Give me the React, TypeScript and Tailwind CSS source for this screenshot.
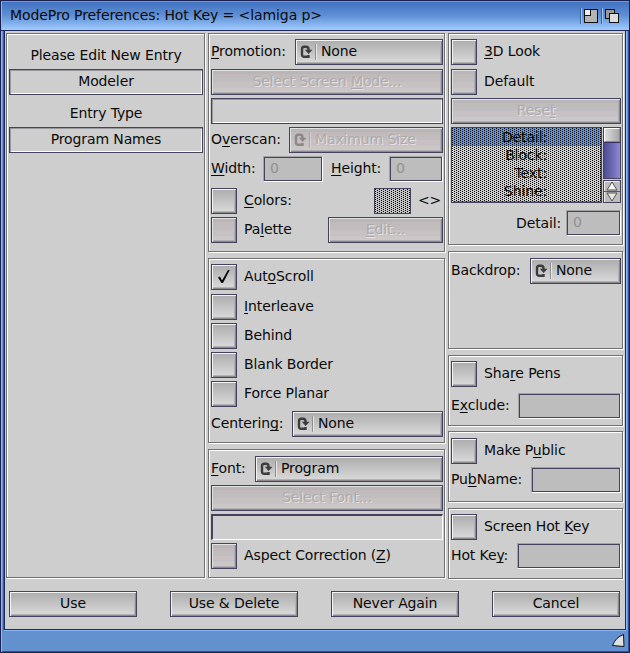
import React from "react";

const FONT = "font-['DejaVu_Sans',sans-serif] tracking-[-0.12px]";

const RAISED =
  "border border-[#44425c] shadow-[inset_1px_1px_0_#f4f4f4,inset_-1px_-1px_0_#8a8a8e,inset_-2px_-2px_0_#b2b2b4] bg-linear-to-b from-[#acacac] to-[#dcdcdc]";
const RAISED_OFF =
  "border border-[#44425c] shadow-[inset_1px_1px_0_#e2e2e2,inset_-1px_-1px_0_#8a8a8e,inset_-2px_-2px_0_#b0aeb0] bg-[linear-gradient(180deg,#b8b6b8_0px,#b8b6b8_4px,#c2b9b9_4px,#c2b9b9_7px,#bfbdbf_7px,#bfbdbf_12px,#c9c1c1_12px,#c9c1c1_15px,#c4c2c4_15px,#c4c2c4_18px,#cdc6c6_18px,#cdc6c6_21px,#cacacc_21px)]";
const EMBOSS = "text-[#aeaaac] [text-shadow:1px_1px_0_#e6e2e4]";

/* Renders a label; the character after "_" is its keyboard shortcut. */
function Txt({ t, className = "" }: { t: string; className?: string }) {
  const i = t.indexOf("_");
  return (
    <span className={`whitespace-pre ${className}`}>
      {i < 0 ? (
        t
      ) : (
        <>
          {t.slice(0, i)}
          <span className="underline decoration-1 underline-offset-2 [text-decoration-skip-ink:none]">{t[i + 1]}</span>
          {t.slice(i + 2)}
        </>
      )}
    </span>
  );
}

/* Label in front of a gadget in a row */
function Label({ t, className = "" }: { t: string; className?: string }) {
  return <Txt t={t} className={`pb-[2px] ${className}`} />;
}

function Group({ className = "", children }: { className?: string; children?: React.ReactNode }) {
  return (
    <div
      className={`flex flex-col border border-[#717174] pr-px pl-[2px] shadow-[inset_1px_1px_0_#fff,1px_1px_0_#fff] ${className}`}
    >
      {children}
    </div>
  );
}

function Row({ className = "", children }: { className?: string; children?: React.ReactNode }) {
  return <div className={`flex h-[26px] shrink-0 items-center justify-between leading-[24px] ${className}`}>{children}</div>;
}

function Button({ t, off, className = "" }: { t: string; off?: boolean; className?: string }) {
  return (
    <button className={`h-[26px] shrink-0 pb-px text-center leading-[23px] ${off ? RAISED_OFF + " " + EMBOSS : RAISED} ${className}`}>
      <Txt t={t} />
    </button>
  );
}

function CycleIcon({ off }: { off?: boolean }) {
  const c = off ? "#8b8888" : "#3c3c3c";
  return (
    <svg width="14" height="14" viewBox="0 0 14 14" className="shrink-0">
      <path d="M8.500 10V11.800H4.200Q2 11.800 2 9.500V4Q2 1.700 4.200 1.700H6Q8.500 1.700 8.500 4V5.500" fill="none" stroke={c} strokeWidth="2.400" />
      <path d="M4.800 4.800H12.500L8.600 9Z" fill={c} />
    </svg>
  );
}

function Cycle({ t, off, className = "" }: { t: string; off?: boolean; className?: string }) {
  return (
    <button className={`flex h-[26px] items-center pl-1 text-left leading-[24px] ${off ? RAISED_OFF : RAISED} ${className}`}>
      <CycleIcon off={off} />
      <span className={`ml-px h-4 w-[2px] shrink-0 border-r border-l border-l-[#8f8f92] border-r-[#e6e6e6] ${off ? "opacity-50" : ""}`} />
      <Txt t={t} className={`relative -top-px ml-1 ${off ? EMBOSS : ""}`} />
    </button>
  );
}

function Check({ t, on, off, className = "" }: { t: string; on?: boolean; off?: boolean; className?: string }) {
  return (
    <div className={`flex h-[26px] shrink-0 items-center leading-[24px] ${className}`}>
      <span className={`flex size-[26px] items-center justify-center ${off ? RAISED_OFF : RAISED}`}>
        {on && (
          <svg width="14" height="16" viewBox="0 0 14 16">
            <path d="M1 8.500L3 7.500L5 11.500L11 1L12.700 1L6 14L4.500 14Z" fill="#000" />
          </svg>
        )}
      </span>
      <Txt t={t} className="relative -top-px ml-[7px]" />
    </div>
  );
}

/* Disabled string gadget */
function Field({ v, className = "" }: { v?: string; className?: string }) {
  return (
    <span className={`h-[26px] shrink-0 border border-t-[#a2a2a4] border-r-white border-b-white border-l-[#a2a2a4] ${className}`}>
      <span className="block h-6 border border-[#44425c] bg-[#bdbdbd] pl-[5px] leading-[20px] text-[#929292]">{v}</span>
    </span>
  );
}

function Sunken({ t, className = "" }: { t?: string; className?: string }) {
  return (
    <div
      className={`h-[26px] shrink-0 border border-[#44425c] pb-px text-center leading-[23px] shadow-[inset_1px_1px_0_#98989c,inset_-1px_-1px_0_#fff] ${className}`}
    >
      {t}
    </div>
  );
}

/* Ghosting pattern laid over disabled areas */
function Dither({ id }: { id: string }) {
  return (
    <svg className="pointer-events-none absolute inset-0 h-full w-full" shapeRendering="crispEdges">
      <defs>
        <pattern id={id} width="4" height="2" patternUnits="userSpaceOnUse">
          <path d="M0 0h1v1H0zM2 1h1v1H2z" fill="#000" />
        </pattern>
      </defs>
      <rect width="100%" height="100%" fill={`url(#${id})`} />
    </svg>
  );
}

function PenList() {
  return (
    <div className="mt-[3px] flex h-[76px] shrink-0 gap-px">
      <div className="relative h-[76px] w-[151px] border border-[#44425c] shadow-[inset_1px_1px_0_#fff,inset_-1px_-1px_0_#7c7c80]">
        {["Detail:", "Block:", "Text:", "Shine:"].map((p, i) => (
          <div key={p} className={`h-[18px] pr-[54px] text-right leading-[18px] ${i === 0 ? "bg-[#6496d8]" : ""}`}>
            {p}
          </div>
        ))}
        <Dither id="dither-list" />
      </div>
      <div className="flex w-[18px] flex-col gap-px">
        <div className="flex h-[52px] flex-col border border-[#44425c]">
          <div className="h-[14px] border border-t-white border-r-[#8a8a8c] border-b-[#8a8a8c] border-l-white bg-linear-to-r from-[#dedede] to-[#a8a8a8]" />
          <div className="flex-1 border-t border-[#333060] bg-linear-to-r from-[#4c4a92] to-[#8c8ad2]" />
        </div>
        <svg width="18" height="23" viewBox="0 0 18 23">
          <rect x=".5" y=".5" width="17" height="22" fill="#bdbdbd" stroke="#44425c" />
          <path d="M1.500 22V1.500H16" fill="none" stroke="#eee" />
          <path d="M1 11.500H17" stroke="#5a5a5e" />
          <path d="M9 2L14 10H4Z" fill="#f4f4f4" stroke="#555" />
          <path d="M9 21L14 13H4Z" fill="#e8e8e8" stroke="#555" />
        </svg>
      </div>
    </div>
  );
}

export default function App() {
  return (
    <div
      className={`flex h-[653px] w-[630px] flex-col border border-[#1a2050] bg-[#6390ce] text-[14px] text-[#0a0a0a] shadow-[inset_1px_0_0_#8ab8f8,inset_-1px_-1px_0_#2c50a0] ${FONT}`}
    >
      <header className="flex h-[30px] shrink-0 items-center border-b border-[#20285a] bg-linear-to-b from-[#3f70c0] via-[#5f8fd4] to-[#a0ccff] pl-[9px] shadow-[inset_0_1px_0_#6a9ce4,inset_1px_0_0_#8ab8f8]">
        <Txt t="ModePro Preferences: Hot Key = <lamiga p>" className="flex-1 tracking-[-0.09px]" />
        <svg width="54" height="28" viewBox="0 0 54 28">
          <path d="M5.500 6V22M26.500 6V22" stroke="#38639f" />
          <path d="M6.500 6V22M27.500 6V22" stroke="#9cc4f4" />
          <rect x="9.500" y="7.500" width="13" height="13" fill="#b4b4b4" stroke="#111" />
          <rect x="9.500" y="7.500" width="6" height="6" fill="#eee" stroke="#111" />
          <rect x="30.500" y="7.500" width="9" height="9" fill="#999" stroke="#111" />
          <rect x="34.500" y="11.500" width="9" height="9" fill="#ddd" stroke="#111" />
        </svg>
      </header>

      <div className="mx-[3px] flex h-[599px] shrink-0 flex-col border-x border-b border-[#20285a] bg-[#cecece] shadow-[-1px_0_0_#2f5fb0,1px_0_0_#8ab8f8,0_1px_0_#8ab8f8]">
        <main className="flex gap-[3px] pt-[2px] pl-px">
          <Group className="h-[545px] w-[199px] pt-2 text-center">
            <div className="h-[27px] leading-[27px]">Please Edit New Entry</div>
            <Sunken t="Modeler" className="w-[194px]" />
            <div className="mt-[3px] h-[29px] leading-[31px]">Entry Type</div>
            <Sunken t="Program Names" className="w-[194px]" />
          </Group>

          <div className="flex w-[237px] flex-col">
            <Group className="h-[219px] pt-[5px]">
              <Row>
                <Label t="_Promotion:" />
                <Cycle t="None" className="w-[148px]" />
              </Row>
              <Button t="Select Screen _Mode..." off className="mt-1" />
              <Sunken className="mt-[3px]" />
              <Row className="mt-[3px]">
                <Label t="O_verscan:" />
                <Cycle t="Maximum Size" off className="w-[154px]" />
              </Row>
              <Row className="mt-[3px]">
                <Label t="_Width:" className="w-[52px]" />
                <Field v="0" className="w-[60px]" />
                <Label t="_Height:" className="ml-[8px] w-[58px]" />
                <Field v="0" className="w-[54px]" />
              </Row>
              <Row className="mt-[6px]">
                <Check t="_Colors:" />
                <div className="flex items-center">
                  <span className="relative h-[26px] w-[37px] border border-[#44425c] bg-[#c4c4c4]">
                    <Dither id="dither-swatch" />
                  </span>
                  <Label t="<>" className="ml-[7px] w-[25px]" />
                </div>
              </Row>
              <Row className="mt-[3px]">
                <Check t="Pa_lette" off />
                <Button t="_Edit..." off className="w-[115px]" />
              </Row>
            </Group>

            <Group className="mt-[6px] h-[185px] pt-[5px]">
              <Check t="Aut_oScroll" on />
              <Check t="_Interleave" className="mt-1" />
              <Check t="Behind" className="mt-[3px]" />
              <Check t="Blank Border" className="mt-[3px]" />
              <Check t="Force Planar" className="mt-[3px]" />
              <Row className="mt-1">
                <Label t="Centerin_g:" />
                <Cycle t="None" className="w-[151px]" />
              </Row>
            </Group>

            <Group className="mt-[6px] h-[129px] pt-[6px]">
              <Row>
                <Label t="_Font:" />
                <Cycle t="Program" className="w-[188px]" />
              </Row>
              <Button t="Select Font..." off className="mt-[3px]" />
              <div className="mt-[3px] h-[26px] border-t-2 border-r border-b border-l-2 border-t-[#44425c] border-r-white border-b-white border-l-[#44425c]" />
              <Check t="Aspect Correction (_Z)" off className="mt-[3px]" />
            </Group>
          </div>

          <div className="flex w-[175px] flex-col">
            <Group className="h-[212px] pt-[5px]">
              <Check t="_3D Look" />
              <Check t="Default" off className="mt-1" />
              <Button t="Rese_t" off className="mt-[3px]" />
              <PenList />
              <Row className="mt-[7px]">
                <Txt t="Detail:" className="ml-[65px]" />
                <Field v="0" className="w-[55px]" />
              </Row>
            </Group>
            <Group className="mt-[6px] h-[98px] pt-[6px]">
              <Row>
                <Label t="Backdrop:" />
                <Cycle t="None" className="w-[91px]" />
              </Row>
            </Group>
            <Group className="mt-[6px] h-[71px] pt-[5px]">
              <Check t="Sha_re Pens" />
              <Row className="mt-[6px]">
                <Label t="E_xclude:" />
                <Field className="w-[103px]" />
              </Row>
            </Group>
            <Group className="mt-[5px] h-[71px] pt-[6px]">
              <Check t="Make P_ublic" />
              <Row className="mt-[3px]">
                <Label t="Pu_bName:" />
                <Field className="w-[90px]" />
              </Row>
            </Group>
            <Group className="mt-[6px] h-[71px] pt-[5px]">
              <Check t="Screen Hot _Key" />
              <Row className="mt-[3px]">
                <Label t="Hot Ke_y:" />
                <Field className="w-[104px]" />
              </Row>
            </Group>
          </div>
        </main>

        <div className="mt-3 flex gap-[33px] pl-1">
          <Button t="Use" className="w-[128px]" />
          <Button t="Use & Delete" className="w-[128px]" />
          <Button t="Never Again" className="w-[128px]" />
          <Button t="Cancel" className="w-[128px]" />
        </div>
      </div>

      <footer className="flex flex-1 items-start justify-end pt-[3px] pr-[3px]">
        <svg width="15" height="15" viewBox="0 0 15 15">
          <path d="M1.500 12.500Q5 4 12.500 1.500L13 13.500Z" fill="#e0e0e0" stroke="#111" strokeLinejoin="round" />
        </svg>
      </footer>
    </div>
  );
}
